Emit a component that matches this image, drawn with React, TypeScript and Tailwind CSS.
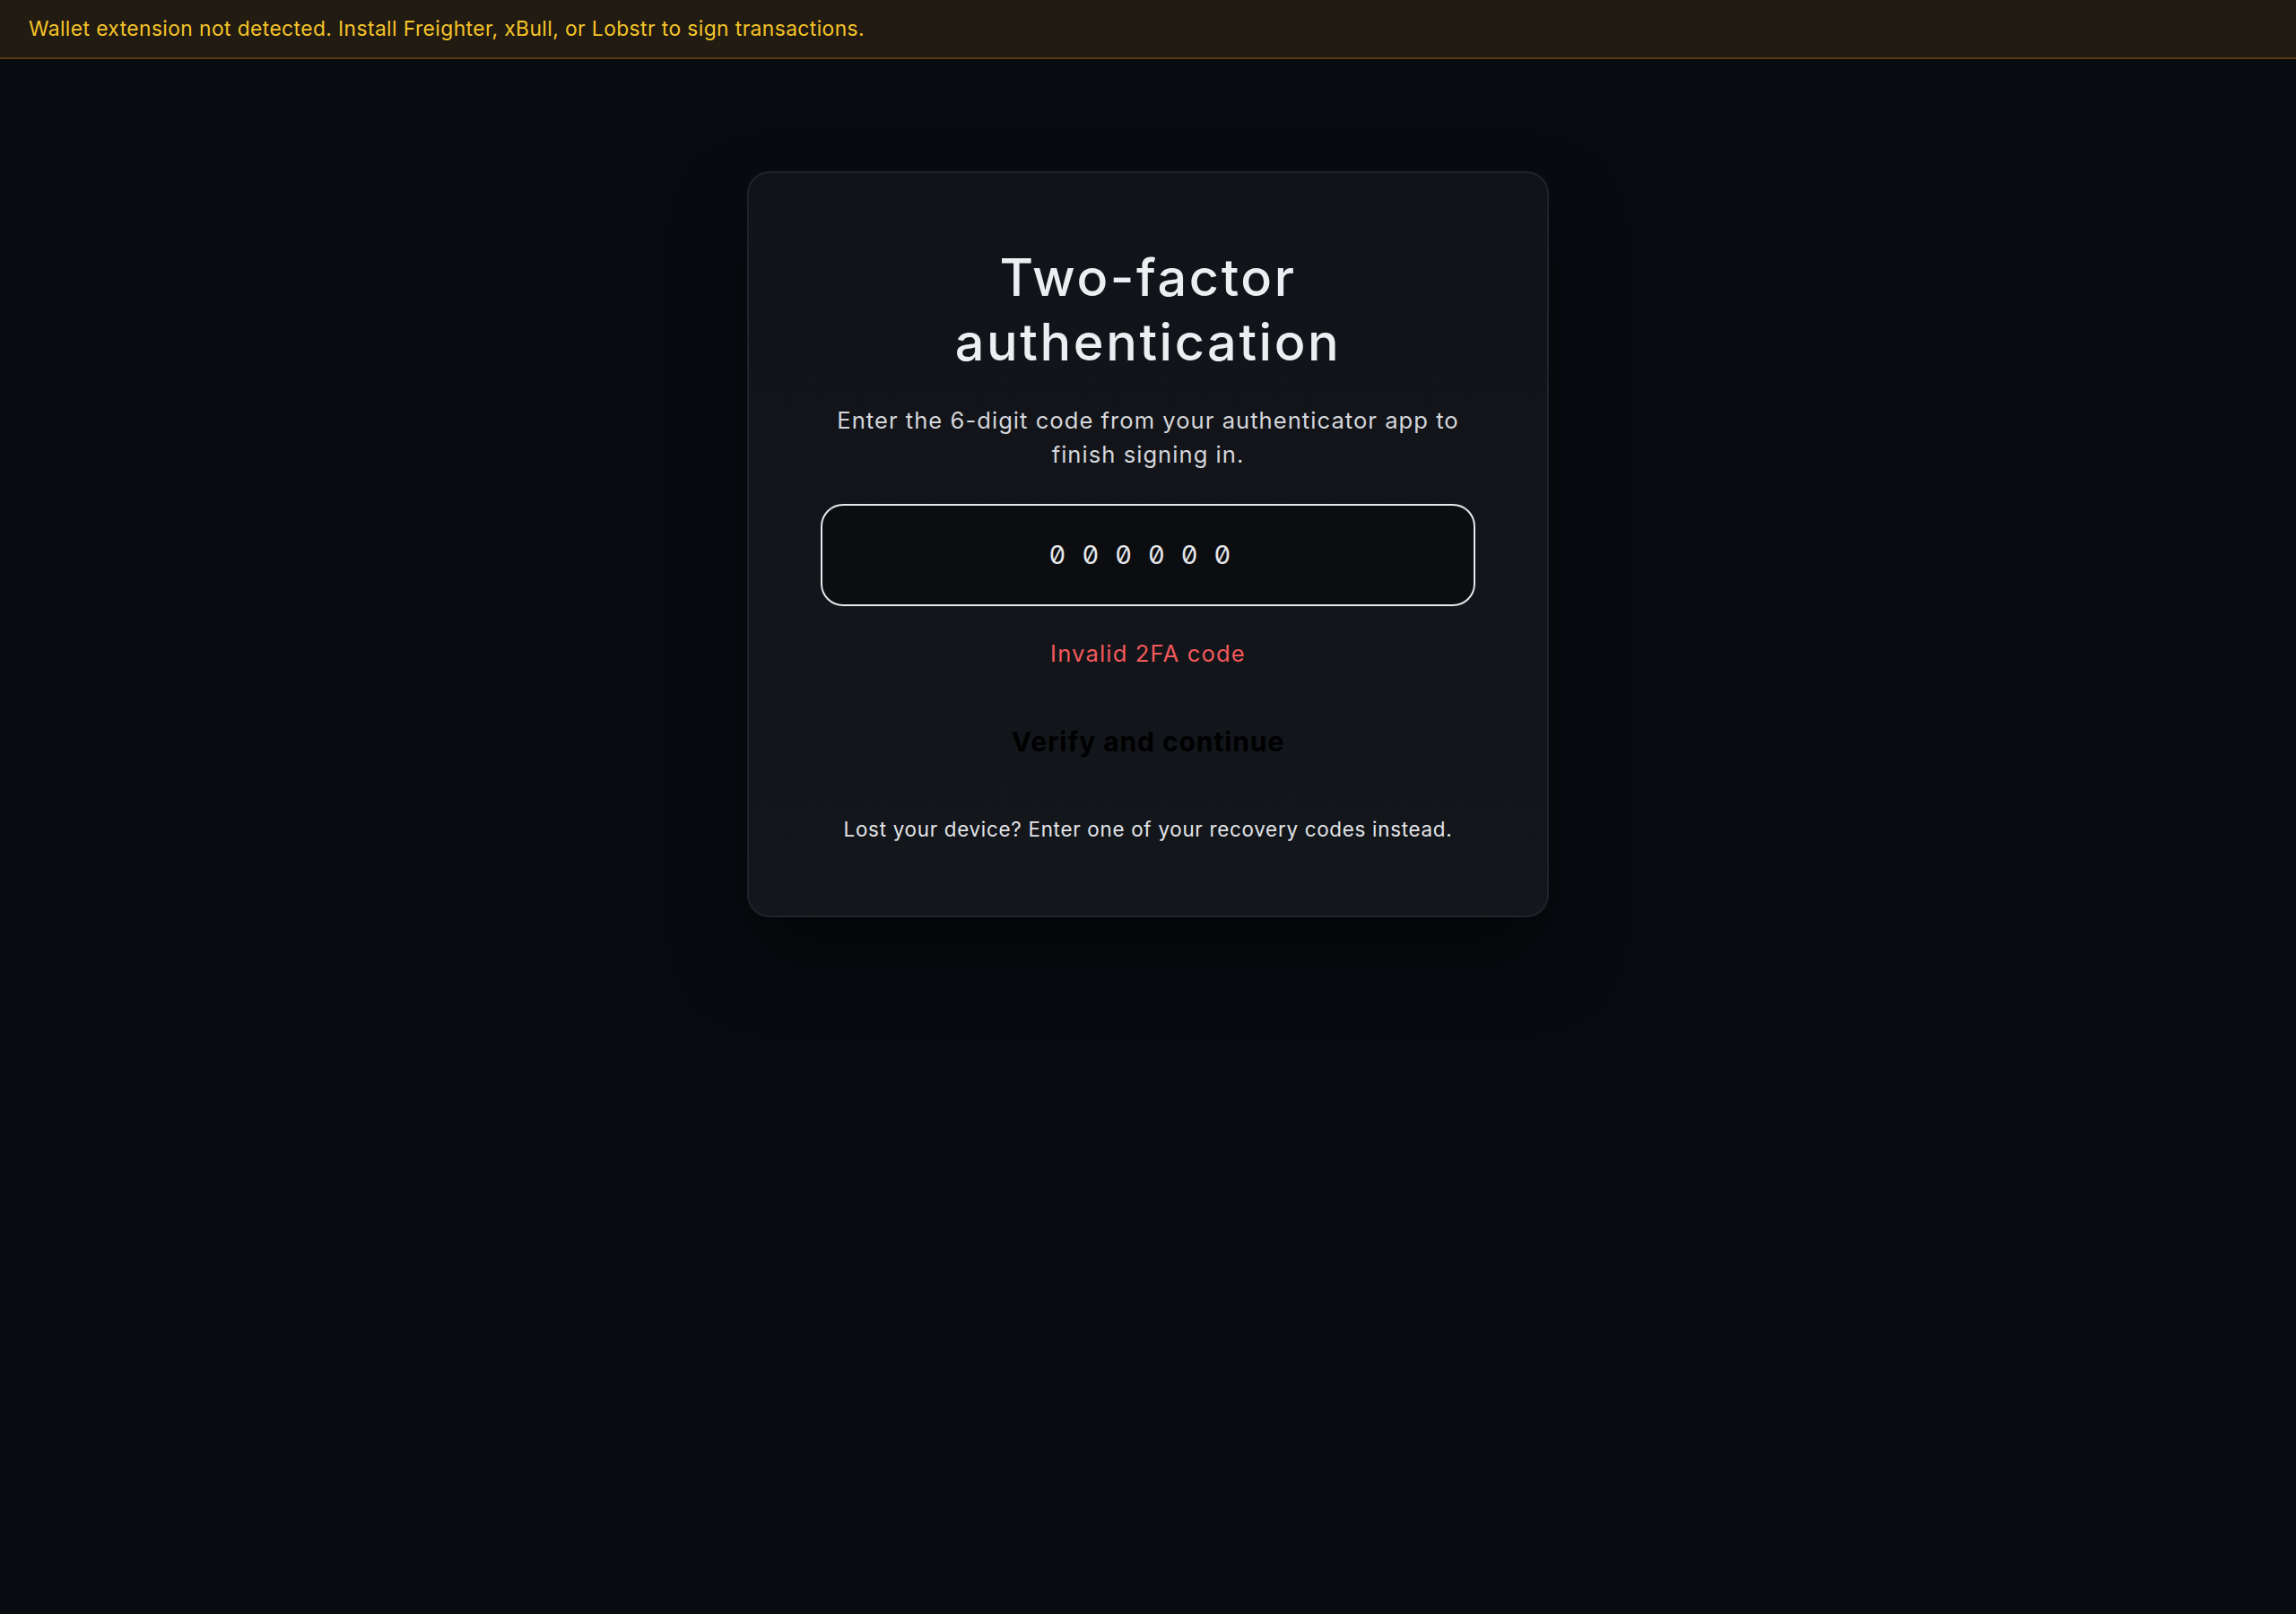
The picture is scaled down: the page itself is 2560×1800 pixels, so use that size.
import { useState } from "react";

export default function App() {
	const [code, setCode] = useState("");

	return (
		<div className="min-h-screen bg-[#080b10] font-['Inter','Noto_Sans',sans-serif]">
			<div className="flex h-[66px] items-center border-b-2 border-[#5c3b12] bg-[#211b12] px-[32px]">
				<p className="text-[22.8px] tracking-[0.018em] text-[#f5c427]">
					Wallet extension not detected. Install Freighter, xBull, or Lobstr to sign transactions.
				</p>
			</div>

			<main className="flex justify-center pt-[125px]">
				<div className="w-[894px] rounded-[25px] border-2 border-[#202329] bg-gradient-to-b from-[#111318] to-[#13161b] px-[80px] py-[80px] text-center shadow-[0_45px_90px_-12px_rgba(0,0,0,0.65)]">
					<h1 className="text-[57.6px] leading-[72px] font-medium tracking-[0.045em] text-[#eceef2]">
						Two-factor
						<br />
						authentication
					</h1>
					<p className="mt-[33px] text-[25.6px] leading-[38.4px] tracking-[0.04em] text-[#d4d6db]">
						Enter the 6-digit code from your authenticator app to finish signing in.
					</p>

					<input
						type="text"
						inputMode="numeric"
						maxLength={6}
						value={code}
						onChange={(e) => setCode(e.target.value.replace(/\D/g, ""))}
						placeholder="000000"
						className="mt-[35px] block h-[114px] w-full rounded-[25px] border-2 border-[#e5e7eb] bg-[#0c0d11] text-center text-[29px] tracking-[18px] text-[#eceef2] outline-none [font-feature-settings:'zero','tnum'] placeholder:text-[#e5e7eb]"
					/>

					<p className="mt-[34px] text-[25.6px] leading-[38px] tracking-[0.045em] text-[#f2595b]">
						Invalid 2FA code
					</p>

					<button
						type="submit"
						className="mt-[32px] flex h-[96px] w-full items-center justify-center rounded-[25px] text-[30px] font-bold tracking-[0.03em] text-[#000000]"
					>
						Verify and continue
					</button>

					<p className="mt-[33px] text-[22.4px] leading-[32px] tracking-[0.032em] text-[#e2e4e8]">
						Lost your device? Enter one of your recovery codes instead.
					</p>
				</div>
			</main>
		</div>
	);
}
